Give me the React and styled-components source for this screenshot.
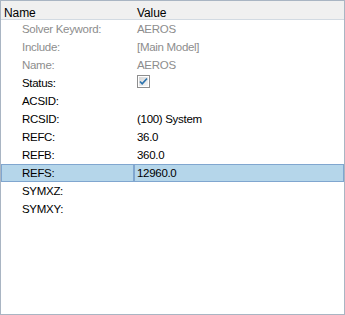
import React from "react";
import styled, { createGlobalStyle } from "styled-components";

const Global = createGlobalStyle`
  html, body { margin: 0; padding: 0; background: #ffffff; }
  body { font-family: "Liberation Sans", Arial, sans-serif; font-size: 11.5px; letter-spacing: -0.3px; }
`;

const Panel = styled.div`
  width: 345px;
  height: 315px;
  box-sizing: border-box;
  border: 1px solid #a9b5c3;
  background: #ffffff;
  display: flex;
  flex-direction: column;
  overflow: hidden;
`;

const Header = styled.div`
  display: grid;
  grid-template-columns: 132px 1fr;
  height: 19px;
  box-sizing: border-box;
  padding-top: 5px;
  background: #f0f0f0;
  border-bottom: 1px solid #d2dae2;
  line-height: 14px;
  font-size: 12px;
  letter-spacing: -0.1px;
  color: #000;
`;

const HeadCell = styled.div`
  padding-left: ${(p) => p.$pad}px;
  white-space: nowrap;
`;

const Rows = styled.div`
  display: flex;
  flex-direction: column;
`;

const Row = styled.div`
  display: grid;
  grid-template-columns: 132px 1fr;
  height: 18px;
  box-sizing: border-box;
  line-height: ${(p) => (p.$selected ? 16 : 18)}px;
  color: ${(p) => (p.$muted ? "#8d8d8d" : "#000")};
  background: ${(p) => (p.$selected ? "#b5d6ea" : "transparent")};
  border: ${(p) => (p.$selected ? "1px solid #80a6cf" : "none")};
`;

const Label = styled.div`
  padding-left: ${(p) => (p.$selected ? 20 : 21)}px;
  white-space: nowrap;
`;

const Value = styled.div`
  padding-left: ${(p) => (p.$selected ? 2 : 4)}px;
  white-space: nowrap;
  display: flex;
  align-items: flex-start;
  border-left: ${(p) => (p.$selected ? "2px solid #80a6cf" : "none")};
  margin-left: ${(p) => (p.$selected ? "-1px" : "0")};
`;

const CheckBox = styled.svg`
  margin-top: 1px;
  display: block;
`;

function Check() {
  return (
    <CheckBox width="13" height="13" viewBox="0 0 13 13">
      <defs>
        <linearGradient id="cbg" x1="0" y1="0" x2="1" y2="1">
          <stop offset="0" stopColor="#d6d6d6" />
          <stop offset="1" stopColor="#f6f6f6" />
        </linearGradient>
      </defs>
      <rect x="0.5" y="0.5" width="12" height="12" fill="#ffffff" stroke="#8e8e8e" />
      <rect x="2" y="2" width="9" height="9" fill="url(#cbg)" />
      <path d="M3 6.5 L5.2 8.8 L10 3.5" fill="none" stroke="#2c73ad" strokeWidth="1.7" />
    </CheckBox>
  );
}

const data = [
  { name: "Solver Keyword:", value: "AEROS", muted: true },
  { name: "Include:", value: "[Main Model]", muted: true },
  { name: "Name:", value: "AEROS", muted: true },
  { name: "Status:", check: true },
  { name: "ACSID:", value: "" },
  { name: "RCSID:", value: "(100) System" },
  { name: "REFC:", value: "36.0" },
  { name: "REFB:", value: "360.0" },
  { name: "REFS:", value: "12960.0", selected: true },
  { name: "SYMXZ:", value: "" },
  { name: "SYMXY:", value: "" },
];

export default function App() {
  return (
    <>
      <Global />
      <Panel>
        <Header>
          <HeadCell $pad={3}>Name</HeadCell>
          <HeadCell $pad={4}>Value</HeadCell>
        </Header>
        <Rows>
          {data.map((r) => (
            <Row key={r.name} $muted={r.muted} $selected={r.selected}>
              <Label $selected={r.selected}>{r.name}</Label>
              <Value $selected={r.selected}>{r.check ? <Check /> : r.value}</Value>
            </Row>
          ))}
        </Rows>
      </Panel>
    </>
  );
}
